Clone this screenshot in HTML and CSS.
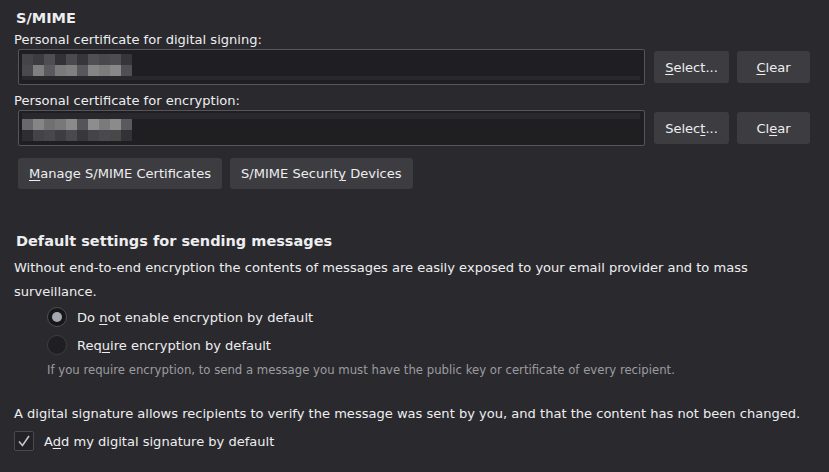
FILE: index.html
```html
<!DOCTYPE html>
<html>
<head>
  <title>S/MIME settings</title>
  <link rel="stylesheet" href="styles.css">
</head>
<body>
  <section class="group">
    <h2>S/MIME</h2>
    <label class="field-label">Personal certificate for digital signing:</label>
    <div class="cert-row">
      <div class="cert-field">
        <div class="blur blur-sign"></div>
        <div class="stripe"></div>
      </div>
      <button class="btn btn-select"><u>S</u>elect...</button>
      <button class="btn btn-clear"><u>C</u>lear</button>
    </div>

    <label class="field-label">Personal certificate for encryption:</label>
    <div class="cert-row">
      <div class="cert-field">
        <div class="stripe top"></div>
        <div class="blur blur-enc"></div>
      </div>
      <button class="btn btn-select">Selec<u>t</u>...</button>
      <button class="btn btn-clear">Cl<u>e</u>ar</button>
    </div>

    <div class="btn-row">
      <button class="btn"><u>M</u>anage S/MIME Certificates</button>
      <button class="btn">S/MIME Securit<u>y</u> Devices</button>
    </div>
  </section>

  <section class="group defaults">
    <h2>Default settings for sending messages</h2>
    <p class="text">Without end-to-end encryption the contents of messages are easily exposed to your email provider and to mass surveillance.</p>
    <div class="options">
      <label class="radio"><span class="dot checked"></span><span>Do <u>n</u>ot enable encryption by default</span></label>
      <label class="radio"><span class="dot"></span><span>Req<u>u</u>ire encryption by default</span></label>
      <p class="hint">If you require encryption, to send a message you must have the public key or certificate of every recipient.</p>
    </div>
    <p class="text sig">A digital signature allows recipients to verify the message was sent by you, and that the content has not been changed.</p>
    <label class="check">
      <span class="box">
        <svg width="14" height="14" viewBox="0 0 14 14"><path d="M2 7.5 L5.5 11.5 L12 2" fill="none" stroke="#c4c4c8" stroke-width="1.6"/></svg>
      </span>
      <span>A<u>d</u>d my digital signature by default</span>
    </label>
  </section>
</body>
</html>
```
FILE: styles.css
```css
body {
  margin: 0;
  padding: 9px 19px 0 14px;
  background-color: #2a2a2e;
  color: #eeeef0;
  font-family: "DejaVu Sans", Verdana, sans-serif;
  font-size: 13.05px;
}

h2 {
  margin: 0;
  padding-left: 2px;
  font-size: 14.5px;
  font-weight: bold;
  line-height: 18px;
}

u {
  text-decoration-thickness: 1px;
  text-underline-offset: 2px;
}

.field-label {
  display: block;
  line-height: 18px;
  margin-top: 4px;
}

/* bottom margin collapses with the next label / button row */
.cert-row {
  display: flex;
  align-items: center;
  gap: 8px;
  margin: 0 0 7px 4px;
}

.cert-field {
  flex: 1;
  height: 34px;
  margin-right: 1px;
  background-color: #1f1f22;
  border: 1px solid #56565a;
  border-radius: 2px;
  padding: 0 4px 0 3px;
  box-sizing: content-box;
}

.blur {
  width: 110px;
  height: 22px;
  background-repeat: no-repeat;
  background-size: 110px 11px;
  background-position: 0 0, 0 11px;
}

.blur-sign {
  margin-top: 4px;
  background-image:
    linear-gradient(90deg, #454549 0 11px, #3c3c40 11px 22px, #4f4f53 22px 33px, #333337 33px 44px, #4b4b4f 44px 55px, #37373b 55px 66px, #505054 66px 77px, #49494d 77px 88px, #4d4d51 88px 99px, #36363a 99px),
    linear-gradient(90deg, #4a4a4e 0 11px, #7f7f7f 11px 22px, #5a5a5e 22px 33px, #7a7a7a 33px 44px, #808080 44px 55px, #58585c 55px 66px, #858585 66px 77px, #7c7c7c 77px 88px, #888888 88px 99px, #505054 99px);
}

.blur-enc {
  background-image:
    linear-gradient(90deg, #69696b 0 11px, #858585 11px 22px, #707070 22px 33px, #787878 33px 44px, #8a8a8a 44px 55px, #555559 55px 66px, #8d8d8d 66px 77px, #7a7a7a 77px 88px, #8b8b8b 88px 99px, #5a5a5e 99px),
    linear-gradient(90deg, #2e2e32 0 11px, #444448 11px 22px, #48484c 22px 33px, #3e3e42 33px 44px, #4a4a4e 44px 55px, #38383c 55px 66px, #454549 66px 77px, #4a4a4e 77px 88px, #484848 88px 99px, #333337 99px);
}

.stripe {
  height: 4px;
  background-color: #29292d;
}

.stripe.top {
  height: 6px;
  margin-top: 2px;
}

.btn {
  font-family: inherit;
  font-size: 13.05px;
  color: #eeeef0;
  background-color: #3d3d41;
  border: none;
  border-radius: 3px;
  height: 32px;
  padding: 0 11px;
  cursor: pointer;
}

.btn:hover {
  background-color: #4a4a4f;
}

.btn-select {
  width: 75px;
  padding: 0;
}

.btn-clear {
  width: 73px;
  padding: 0;
}

.btn-row {
  display: flex;
  gap: 8px;
  margin: 12px 0 0 4px;
}

.btn-row .btn {
  height: 31px;
}

.defaults {
  margin-top: 43px;
}

.text {
  margin: 6px 0 0;
  line-height: 24px;
}

.options {
  padding-left: 33px;
  margin-top: -1px;
}

.radio {
  display: flex;
  align-items: center;
  height: 28px;
}

.dot {
  width: 18px;
  height: 18px;
  margin-right: 10px;
  border: 1px solid #3e3e42;
  border-radius: 50%;
  background-color: #1f1f22;
  position: relative;
}

.dot.checked {
  background-color: #17171a;
  border-color: #505054;
}

.dot.checked::after {
  content: "";
  position: absolute;
  left: 4px;
  top: 4px;
  width: 10px;
  height: 10px;
  border-radius: 50%;
  background-color: #a4a8ae;
}

.hint {
  margin: 1px 0 0;
  font-size: 11.7px;
  color: #9c9ca0;
  line-height: 20px;
}

.sig {
  margin-top: 22px;
}

.check {
  display: flex;
  align-items: center;
  margin-top: 4px;
  height: 22px;
}

.box {
  width: 18px;
  height: 18px;
  margin-right: 10px;
  border: 1px solid #4a4a4e;
  border-radius: 2px;
  background-color: #232327;
  display: flex;
  align-items: center;
  justify-content: center;
}
```
